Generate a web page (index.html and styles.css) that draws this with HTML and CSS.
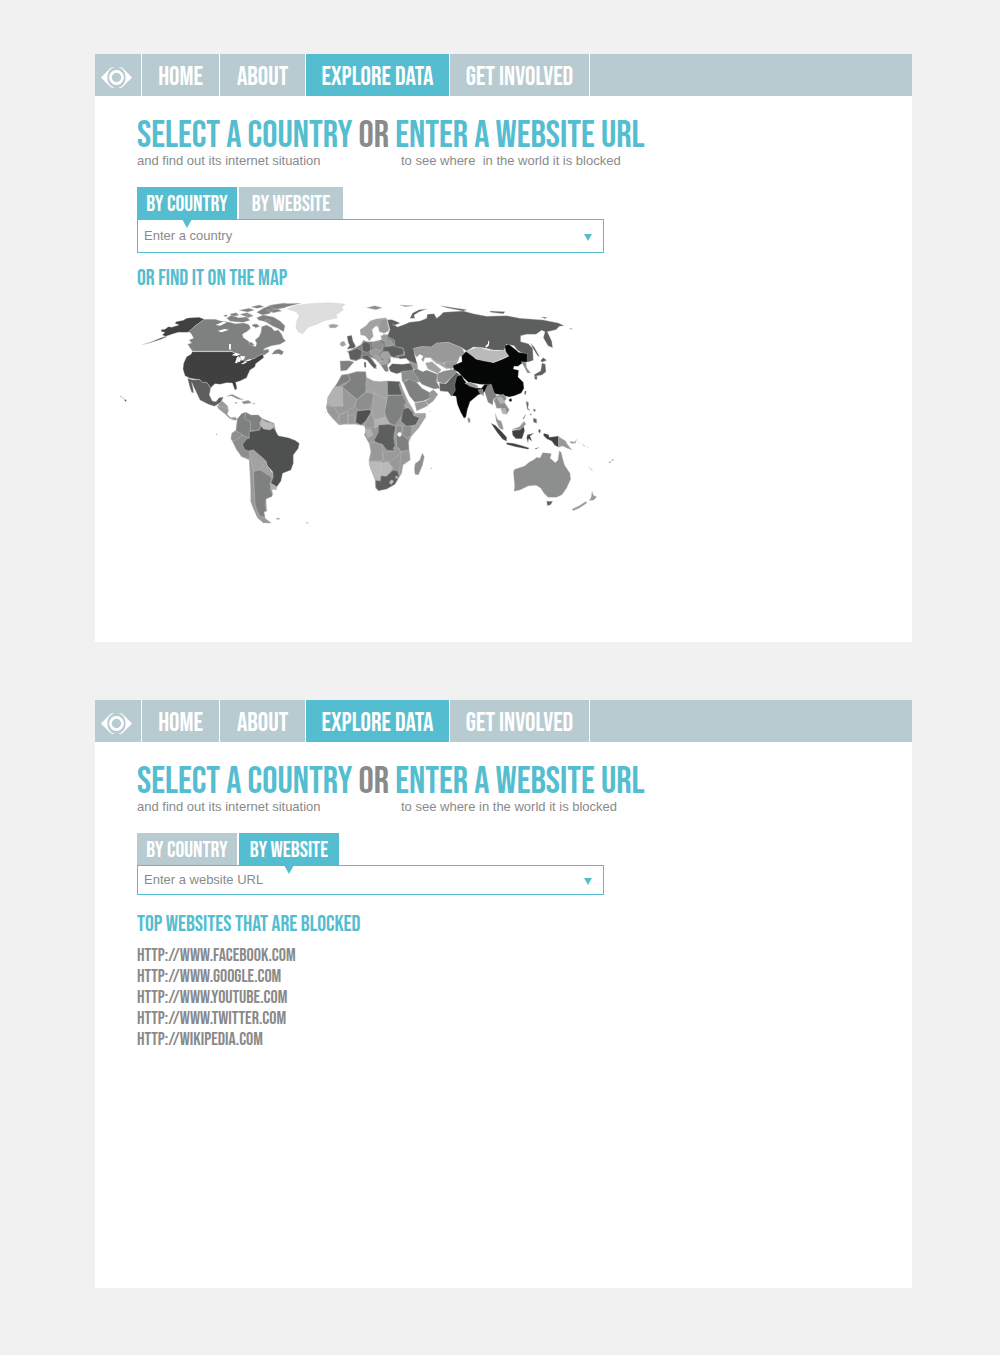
FILE: index.html
```html
<!DOCTYPE html>
<html lang="en">
<head>
<meta charset="utf-8">
<meta name="viewport" content="width=device-width, initial-scale=1">
<title>Explore data</title>
<link rel="stylesheet" href="styles.css">
</head>
<body>
<svg class="sprite" aria-hidden="true">
  <symbol id="eye" viewBox="0 0 92 62">
    <path d="M0 31 28 3C32 0 36 0 40 0 26 6 19 16 19 31s7 25 21 31c-4 0-8 0-12-3Z" fill="#fff"/>
    <path d="M92 31 64 3C60 0 56 0 52 0 66 6 73 16 73 31S66 56 52 62c4 0 8 0 12-3Z" fill="#fff"/>
    <circle cx="46" cy="31" r="18" fill="none" stroke="#fff" stroke-width="8"/>
  </symbol>
</svg>
<main class="page">
  <section class="panel">
    <nav class="nav" aria-label="Main">
      <a class="nav-logo" href="#" aria-label="Start"><svg class="eye"><use href="#eye"/></svg></a>
      <a class="nav-home" href="#">HOME</a>
      <a class="nav-about" href="#">ABOUT</a>
      <a class="nav-explore active" href="#">EXPLORE DATA</a>
      <a class="nav-involved" href="#">GET INVOLVED</a>
    </nav>
    <div class="content">
      <h1 class="headline"><span>SELECT A COUNTRY</span> <em>OR</em> <span>ENTER A WEBSITE URL</span></h1>
      <div class="sublines"><p>and find out its internet situation</p><p class="spaced">to see where  in the world it is blocked</p></div>
      <div class="tabs">
        <button class="tab active" type="button">BY COUNTRY</button>
        <button class="tab wide" type="button">BY WEBSITE</button>
      </div>
      <div class="field">
        <input type="text" aria-label="Country" placeholder="Enter a country">
        <button class="open" type="button" aria-label="Show countries"><svg viewBox="0 0 8 7"><path d="M0 0h8L4 7z"/></svg></button>
      </div>
      <h2 class="subhead">OR FIND IT ON THE MAP</h2>
      <svg class="map" viewBox="0 0 1530 720" role="img" aria-label="World map">
        <!-- North America -->
        <g>
          <path class="c3" d="M268 73 252 67 228 68 215 70 205 76 183 80 180 85 192 90 170 97 160 95 150 103 138 104 140 110 150 112 142 120 155 125 140 132 110 142 82 149 110 140 135 130 170 118 190 112 220 112 240 93Z"/>
          <path class="c6" d="M268 73 300 73 318 78 345 82 360 86 385 84 400 88 408 98 398 108 382 118 385 128 400 138 410 150 422 155 425 145 420 135 432 125 438 112 440 95 455 90 470 98 478 108 490 105 500 118 505 130 512 138 495 148 470 152 450 160 445 166 460 162 462 170 448 180 440 178 420 190 395 197 380 200 375 182 355 172 350 168 232 168 218 148 230 144 222 135 236 130 228 115 220 110 240 93Z"/>
          <path class="c6" d="M335 70 350 60 370 68 395 66 405 76 385 82 360 80 345 78ZM344 57l20-4 8 8-18 3ZM375 58l22-5 18 9-14 6ZM372 46l30-6 16 5-20 6ZM408 36l25-6 14 5-20 5ZM425 52l20-12 25-10 42-6v14l-35 6-15 12-20 4ZM425 68l20-8 30 6 20 12 15 14 -4 18-18-10-14-6-20-12-22-6ZM410 90l14-4 10 8-14 6ZM455 46l30-6 15 8-25 5ZM470 178l10-12 12-4 14 8-6 10-10-4Z"/>
          <path class="c6" d="M400 146l8-5 10 8-8 3ZM392 60l8-3 8 4-6 3ZM448 76l14-2 6 6-10 2ZM326 62l8-3 4 4-8 2Z"/>
          <path class="w" d="M302 90l22-10 12 2-20 10ZM308 108l20-6 14 2-22 8ZM342 148l6-2-1 20-5-4ZM436 76l14 5 4 6-12-3ZM404 92l18 5-2 3-14-2Z"/>
          <path class="c3" d="M232 170 350 170 362 176 378 182 370 190 366 202 375 200 380 190 388 200 400 197 420 190 432 182 444 177 446 188 430 200 422 206 420 215 405 225 398 240 395 248 375 258 362 262 366 280 360 286 355 272 352 264 335 263 315 268 300 266 290 275 288 280 275 262 262 262 255 254 225 250 210 242 204 222 206 205 215 185 228 178Z"/>
          <path class="w" d="M350 181 362 173 376 178 366 183ZM366 186 373 183 366 205 360 204ZM376 183 390 184 388 192 380 198 378 190ZM378 206 394 199 396 202 384 208ZM394 196 406 192 408 195 398 199Z"/>
          <path class="c5" d="M218 250 232 254 255 254 262 262 275 262 287 280 283 300 292 318 303 320 312 308 325 306 318 322 308 328 298 334 280 328 255 315 246 296 230 262 234 280 236 294 230 292 224 275Z"/>
          <path class="c8" d="M308 330 322 318 338 333 340 348 330 350 320 340Z"/>
          <path class="c7" d="M335 304l16-6 25 12 10 5-18-3-18-9ZM380 320l20-4 10 8-24 3ZM360 322l8 1-6 3ZM414 324l7 1-6 3ZM436 328l3 4M440 346l3 6"/>
          <path class="c3" d="M28 313l6 2-1 5-5-4ZM16 303l4 2-3 1ZM22 307l5 3-3 0Z"/>
        </g>
        <!-- South America -->
        <g transform="translate(285 330)">
          <path class="c8" d="M20 2 42 7 56 14 52 28 62 38 77 36 82 44 72 46 58 40 44 26 26 12Z"/>
          <path class="c7" d="M82 42 95 26 108 22 122 30 145 30 156 40 192 55 198 80 150 90 170 180 195 215 185 250 188 268 168 282 170 318 160 322 166 340 182 354 160 352 142 335 128 300 122 240 118 165 95 155 68 110 62 100 66 84 78 75Z"/>
          <path class="c6" d="M82 42 95 26 108 22 104 40 122 50 122 75 118 80 118 100 98 90 78 78Z"/>
          <path class="c6" d="M108 22 122 30 145 30 156 42 150 56 152 66 138 78 122 75 122 50 104 42Z"/>
          <path class="cB" d="M156 42l12 10-2 22-14-8-2-14ZM168 52l14 2-2 20-14 0ZM182 54l11 5-5 15-8-1Z"/>
          <path class="c7" d="M78 78 98 88 88 98 72 110 64 104 66 84Z"/>
          <path class="c7" d="M68 110 88 98 98 90 118 100 98 118 102 132 118 138 120 160 95 155 80 135Z"/>
          <path class="c9" d="M118 138 130 132 158 156 168 168 158 190 145 195 130 198 122 160Z"/>
          <path class="c9" d="M150 192 158 180 172 184 176 198 190 205 186 220 172 216Z"/>
          <path class="c4" d="M98 118 110 102 118 100 118 80 135 78 150 75 152 62 160 72 180 75 190 68 198 80 205 92 235 98 255 106 268 115 265 130 250 150 250 175 243 195 218 205 213 228 200 246 183 235 190 215 188 200 172 182 168 168 158 158 130 134 115 138 102 132Z"/>
          <path class="c6" d="M130 200 150 195 185 217 180 235 183 250 180 255 188 268 185 275 168 282 165 300 170 318 162 320 165 335 150 335 143 320 135 300 132 250Z"/>
          <path class="cA" d="M181 235 200 246 200 254 184 254Z"/>
          <path class="c8" d="M118 160 122 162 130 200 132 250 136 305 148 335 162 338 184 354 160 354 142 338 128 306 122 290 122 240Z"/>
          <path class="c5" d="M197 342l10-3 2 4ZM288 353l8 0-4 2ZM18 86l4 2-3 1Z"/>
        </g>
        <!-- Europe and Asia -->
        <g transform="translate(495 0)">
          <path class="cD" d="M22 42 45 32 90 26 145 23 195 27 185 38 190 44 168 60 172 68 130 78 110 88 85 96 68 116 56 112 48 98 50 80 58 62 48 50Z"/>
          <path class="c6" d="M-35 32 0 26 62 25 30 33 8 38-15 42-22 38Z"/>
          <path class="c9" d="M146 90l14-3 16 4-8 7-18 1ZM182 142l10-4 6 12-12 5-6-6Z"/>
          <path class="c9" d="M242 120 240 104 258 92 270 78 288 72 318 68 322 82 328 102 315 114 300 110 294 96 288 92 276 104 280 124 268 138 262 130 255 122Z"/>
          <path class="c8" d="M296 88 304 74 320 72 324 96 326 108 312 114 298 110Z"/>
          <path class="c5" d="M201 124l14-3 4 18 8 14-4 6-22 4 8-12-4-8Z"/>
          <path class="c6" d="M180 198 208 197 222 201 200 226 182 228Z"/>
          <path class="c6" d="M200 170 214 164 230 156 244 148 250 136 262 140 280 140 304 134 310 118 328 120 342 132 345 154 370 160 375 180 352 190 330 184 332 200 322 210 326 228 316 230 305 214 292 196 272 186 285 205 290 222 274 212 258 190 240 192 228 198 212 194 212 176Z"/>
          <path class="c5" d="M246 146 258 140 270 146 272 166 262 172 248 168ZM205 170 232 160 246 168 242 190 228 196 210 192Z"/>
          <path class="c5" d="M246 182 262 180 270 188 290 212 284 222 262 196 250 192ZM252 202l6 0v16l-5-2Z"/>
          <path class="c7" d="M276 146 300 138 310 150 306 166 282 160Z"/>
          <path class="c8" d="M302 122 318 120 324 132 308 138ZM314 138 332 134 340 150 318 154ZM270 166l18-4 16 6-10 12-22 0Z"/>
          <path class="c9" d="M304 174 322 170 334 188 316 196 302 186ZM278 182l20 0 8 18-12 2ZM300 198l26-2-4 10-18 4Z"/>
          <path class="c5" d="M310 156 345 152 372 162 370 178 350 182 342 188 332 182 326 170 308 168Z"/>
          <path class="c5" d="M322 74 336 74 360 84 340 92 338 86 352 96 375 88 388 82 420 78 440 70 442 58 462 56 470 70 480 62 490 52 515 50 550 48 580 56 620 64 680 62 720 70 790 75 835 84 852 92 838 94 828 104 802 110 815 138 818 158 804 152 790 128 795 110 785 106 768 118 740 118 722 122 722 140 745 146 758 160 760 196 742 202 728 175 712 166 702 152 680 148 672 166 640 165 610 158 580 156 560 168 545 158 505 142 470 145 454 156 424 155 405 160 404 180 412 208 396 206 378 190 360 192 352 186 375 180 370 160 345 154 342 134 322 124 330 104Z"/>
          <path class="c5" d="M390 70 398 54 418 44 440 42 418 50 402 60 404 70ZM482 32 520 38 560 44 550 48 500 38ZM630 48 675 50 670 56 632 52ZM784 66l16 1-4 4ZM868 100l10 2-6 1Z"/>
          <path class="c7" d="M260 38l24-6 22 6-18 6ZM360 30l40 2-24 3Z"/>
          <path class="c5" d="M326 218 336 206 368 208 395 204 402 218 398 228 370 230 350 236 332 230Z"/>
          <path class="c8" d="M384 196 412 208 414 222 400 222 392 206Z"/>
          <path class="c8" d="M400 160 424 155 454 156 470 144 505 142 545 158 556 176 538 186 534 200 510 202 490 204 470 206 452 188 434 188 428 208 412 190 404 178Z"/>
          <path class="c9" d="M436 204 456 200 484 224 474 236 444 222ZM452 192 474 206 500 222 510 218 490 204 470 200Z"/>
          <path class="c8" d="M494 202 532 198 530 210 514 222 494 216Z"/>
          <path class="c6" d="M398 228 408 220 424 228 442 226 472 238 470 260 480 280 462 282 440 274 426 268 406 246Z"/>
          <path class="c7" d="M364 230 396 226 412 246 418 262 404 262 380 254 372 264 366 258Z"/>
          <path class="c6" d="M370 262 388 252 410 262 426 280 448 292 460 292 450 310 430 318 404 322 388 302Z"/>
          <path class="c8" d="M448 292 460 284 474 298 460 318 444 330 436 318 450 310ZM404 324 436 318 444 332 410 348Z"/>
          <path class="c7" d="M472 236 492 228 524 222 530 232 512 250 494 266 472 260Z"/>
          <path class="c5" d="M478 264 498 266 514 248 530 232 544 244 528 270 528 290 514 304 504 290 480 288Z"/>
          <path class="w" d="M410 186 420 178 430 184 424 194 436 206 438 224 430 230 418 224 420 210 408 196Z"/>
          <path class="c0" d="M518 212 546 200 545 182 552 176 558 169 576 178 588 192 612 196 640 203 664 194 686 184 678 176 674 152 686 148 702 160 716 172 742 176 742 200 724 206 714 214 702 214 700 222 716 226 714 246 730 262 732 280 724 294 704 302 688 306 672 302 652 298 640 296 630 270 600 268 565 262 545 244 536 232 522 224ZM686 314l8-4 2 8-6 2Z"/>
          <path class="cB" d="M558 169 588 158 602 158 625 166 652 168 674 166 686 182 664 192 640 202 612 198 588 192Z"/>
          <path class="w" d="M616 154 624 146 624 136 628 142 626 152 618 158Z"/>
          <path class="c0" d="M530 244 544 240 552 254 562 266 590 278 604 280 614 268 632 268 622 282 610 294 594 300 570 320 562 344 558 366 552 370 542 352 532 328 528 304 516 302 526 286 524 270Z"/>
          <path class="c8" d="M554 264 570 262 594 272 592 280 570 274Z"/>
          <path class="c6" d="M594 284l14-2 4 20-12-6ZM614 290 622 272 634 268 642 292 652 304 640 314 638 330 624 322Z"/>
          <path class="c7" d="M642 316 652 302 670 298 680 310 672 320 688 344 680 358 668 352 664 340 650 340Z"/>
          <path class="cA" d="M650 308 664 306 676 322 662 326ZM662 342 676 340 680 358 668 356Z"/>
          <path class="c7" d="M564 367l6 4 1 10-5 3-3-10ZM724 200l14 2 2 16 12 16-10 0-8-16Z"/>
          <path class="c5" d="M752 144l12 14 14 26-4 0-16-26ZM782 196 790 188 800 196 786 202ZM786 204 796 208 798 230 786 240 772 242 762 246 764 238 782 228ZM764 244l8 0-2 10-6-2ZM734 288l5 0-2 12-4-4Z"/>
        </g>
        <!-- Africa -->
        <g transform="translate(630 210)">
          <path class="c8" d="M50 30 65 28 95 20 122 20 125 38 145 48 165 50 187 48 225 50 232 70 250 110 262 130 270 145 300 145 302 155 280 190 258 215 250 235 253 262 255 285 232 300 230 325 210 358 185 372 160 377 152 370 150 345 133 300 132 288 138 260 132 235 118 210 122 195 118 182 105 180 90 178 60 178 42 180 22 160 8 140 4 130 8 100 25 70 40 50Z"/>
          <path class="c6" d="M50 30 70 28 76 46 40 64 30 66Z"/>
          <path class="c6" d="M70 28 95 20 122 20 126 62 122 80 96 104 52 66 76 46Z"/>
          <path class="cA" d="M8 96 28 66 52 66 54 124 24 124 8 118Z"/>
          <path class="c8" d="M52 66 96 104 88 126 64 138 44 150 24 124 54 124Z"/>
          <path class="c7" d="M96 104 124 82 146 86 142 118 134 134 100 136 90 124Z"/>
          <path class="c9" d="M126 38 145 48 165 50 187 48 187 102 146 82 124 80 122 56Z"/>
          <path class="c5" d="M187 48 225 50 222 60 232 90 188 90Z"/>
          <path class="c6" d="M188 92 234 90 244 116 232 150 210 182 190 172 178 142Z"/>
          <path class="c9" d="M146 84 186 102 178 142 182 156 150 166 140 140 144 120Z"/>
          <path class="c4" d="M96 138 134 134 138 142 122 168 108 180 92 172Z"/>
          <path class="c8" d="M4 124 24 124 42 148 36 172 22 158 8 142ZM44 150 68 140 70 176 42 178ZM68 150l20 0 0 26-18 2Z"/>
          <path class="c8" d="M140 144 148 166 150 188 124 188 118 182 126 164Z"/>
          <path class="cA" d="M148 166 182 156 194 176 168 180 150 188ZM120 192 136 192 144 210 128 218Z"/>
          <path class="c5" d="M160 180 192 178 212 184 206 216 210 242 204 250 210 258 186 256 172 238 150 232 148 224 160 202Z"/>
          <path class="c5" d="M234 132 250 128 264 144 266 152 284 158 272 180 244 184 228 168Z"/>
          <path class="c9" d="M266 148 302 145 302 156 280 190 262 208 258 186 274 178 284 158ZM236 122 248 110 262 130 258 132Z"/>
          <path class="c7" d="M234 182 260 184 260 208 248 220 230 208ZM212 184 232 182 230 206 214 208Z"/>
          <path class="c6" d="M214 210 230 208 250 224 252 256 228 260 216 246Z"/>
          <path class="c8" d="M134 232 152 232 172 240 174 286 132 288 138 260Z"/>
          <path class="cB" d="M132 290 170 290 166 346 152 346 136 310ZM168 294 190 290 204 310 184 334 166 330Z"/>
          <path class="c8" d="M174 262 204 260 222 248 228 264 208 280 192 290 176 284ZM228 260 252 256 256 284 234 300 230 324 222 326 226 290Z"/>
          <path class="c5" d="M152 346 166 348 168 332 184 334 204 316 218 318 222 334 210 358 185 372 160 377 152 366Z"/>
          <path class="cB" d="M194 350l6-6 6 5-6 9-6-3ZM212 334l6 0-1 7-5-1Z"/>
          <path class="w" d="M218 204l8-3 4 8-5 7-7-4Z"/>
          <path class="c7" d="M270 296 284 286 292 264 298 276 292 302 280 330 270 328 268 312Z"/>
          <path class="c8" d="M0 142l3 1-2 1ZM317 310l4-2-2 4ZM312 140l6-2Z"/>
        </g>
        <!-- South-east Asia and Oceania -->
        <g transform="translate(975 255)">
          <path class="c8" d="M166 100 172 118 184 124 190 144 188 150 178 144 168 122Z"/>
          <path class="c3" d="M153 130 166 136 186 156 200 172 200 184 188 178 172 158ZM198 188 220 190 242 196 268 204 264 208 226 200 202 194ZM216 152 240 148 250 136 254 152 246 176 228 176 218 166ZM262 164 282 160 270 168 276 184 266 176 264 188 260 174ZM312 160l14 4 2 8 28-4 0 34-12-6-8-12-16-8-10-10ZM284 206l14-4-10 6ZM296 148l6 2-2 10-4-4Z"/>
          <path class="c8" d="M216 148 238 140 252 124 258 132 250 140 240 150Z"/>
          <path class="c8" d="M356 170 376 182 384 196 396 210 380 204 368 198 356 202ZM390 184l14 2 6-8-4 12-14 0ZM414 184l6 6ZM426 190l10 10-6-4ZM440 200l6 4Z"/>
          <path class="c5" d="M258 64l8 4-2 16 6 8-8-4ZM280 86l8 4-6 6ZM280 114l10 4 0 12-10-4ZM248 116l10-14-6 14ZM270 100l6 4-4 2Z"/>
          <path class="c7" d="M220 276 224 268 254 258 268 246 280 240 290 232 300 234 308 218 330 220 334 222 330 234 346 248 354 240 358 212 364 218 368 236 374 256 390 280 392 298 380 324 366 344 350 352 324 352 312 340 302 324 288 316 264 318 240 330 222 334 224 318 222 296Z"/>
          <path class="c5" d="M320 364 338 364 332 374 322 377ZM304 326l7 0-3 4Z"/>
          <path class="c8" d="M456 334 460 346 470 350 462 360 448 362 454 350ZM396 388 420 376 438 364 440 370 418 384 400 392ZM446 260l12 12-4-2ZM506 246l6-2 0 4-5 0ZM514 240l8-2-4 5Z"/>
        </g>
      </svg>
    </div>
  </section>

  <section class="panel">
    <nav class="nav" aria-label="Main, website view">
      <a class="nav-logo" href="#" aria-label="Start"><svg class="eye"><use href="#eye"/></svg></a>
      <a class="nav-home" href="#">HOME</a>
      <a class="nav-about" href="#">ABOUT</a>
      <a class="nav-explore active" href="#">EXPLORE DATA</a>
      <a class="nav-involved" href="#">GET INVOLVED</a>
    </nav>
    <div class="content">
      <h1 class="headline"><span>SELECT A COUNTRY</span> <em>OR</em> <span>ENTER A WEBSITE URL</span></h1>
      <div class="sublines"><p>and find out its internet situation</p><p>to see where in the world it is blocked</p></div>
      <div class="tabs">
        <button class="tab" type="button">BY COUNTRY</button>
        <button class="tab active" type="button">BY WEBSITE</button>
      </div>
      <div class="field short">
        <input type="text" aria-label="Website URL" placeholder="Enter a website URL">
        <button class="open" type="button" aria-label="Show websites"><svg viewBox="0 0 8 7"><path d="M0 0h8L4 7z"/></svg></button>
      </div>
      <h2 class="subhead spacious">TOP WEBSITES THAT ARE BLOCKED</h2>
      <ul class="sites">
        <li><a href="#">HTTP://WWW.FACEBOOK.COM</a></li>
        <li><a href="#">HTTP://WWW.GOOGLE.COM</a></li>
        <li><a href="#">HTTP://WWW.YOUTUBE.COM</a></li>
        <li><a href="#">HTTP://WWW.TWITTER.COM</a></li>
        <li><a href="#">HTTP://WIKIPEDIA.COM</a></li>
      </ul>
    </div>
  </section>
</main>
</body>
</html>
```
FILE: styles.css
```css
:root {
  --teal: #54bdd0;
  --mist: #b8cbd1;
  --grey: #8a8a8a;
  --display: "Bebas Neue", "Liberation Sans Narrow", "Roboto Condensed", "Liberation Sans", sans-serif;
}
* { box-sizing: border-box; }
body {
  margin: 0;
  background: #f1f1f1;
  color: var(--grey);
  font: 13px/16px "Liberation Sans", Arial, sans-serif;
}
h1, h2, p, ul { margin: 0; padding: 0; }
a { color: inherit; text-decoration: none; }
button { border: 0; padding: 0; cursor: pointer; }
.sprite { display: none; }
.page {
  display: flex;
  flex-direction: column;
  gap: 58px;
  padding: 54px 88px 66px 95px;
}
.panel { min-height: 588px; background: #fff; }

.nav {
  display: flex;
  height: 42px;
  background: var(--mist);
  color: #fff;
  font: normal 26px/30px var(--display);
}
.nav a {
  display: flex;
  align-items: center;
  justify-content: center;
  padding-top: 5px;
  border-right: 1px solid #fff;
  white-space: nowrap;
}
.nav .nav-logo { width: 47px; padding-right: 3px; }
.nav-home { width: 78px; }
.nav-about { width: 86px; }
.nav-explore { width: 144px; }
.nav-involved { width: 140px; }
.active { background: var(--teal); }
.eye { width: 31px; height: 21px; }

.content { padding: 23px 42px 0; }
.headline {
  color: var(--teal);
  font: normal 38px/34px var(--display);
  white-space: nowrap;
}
.headline em { color: var(--grey); font-style: normal; }
.sublines { display: flex; }
.sublines p { flex: 0 0 264px; white-space: nowrap; }
.sublines .spaced { white-space: pre; }

.tabs { display: flex; gap: 2px; margin-top: 18px; }
.tab {
  position: relative;
  width: 100px;
  height: 32px;
  padding-top: 3px;
  background: var(--mist);
  color: #fff;
  font: normal 22px/24px var(--display);
}
.tab.wide { width: 104px; }
.tab.active { background: var(--teal); }
.tab.active::after {
  content: "";
  position: absolute;
  top: 100%;
  left: 50%;
  border: 5px solid transparent;
  border-top: 9px solid var(--teal);
  border-bottom: 0;
  transform: translateX(-50%);
}
.field {
  display: flex;
  max-width: 467px;
  height: 34px;
  border: 1px solid var(--teal);
}
.field.short { height: 30px; }
.field input {
  flex: 1;
  min-width: 0;
  padding: 0 6px;
  border: 0;
  background: transparent;
  color: var(--grey);
  font: inherit;
}
.field input::placeholder { color: var(--grey); opacity: 1; }
.open { width: 30px; background: transparent; }
.open svg { width: 8px; height: 7px; fill: var(--teal); }

.subhead {
  margin-top: 16px;
  color: var(--teal);
  font: normal 22px/20px var(--display);
}
.subhead.spacious { margin-top: 20px; }
.sites {
  margin-top: 10px;
  list-style: none;
  font: normal 18px/21px var(--display);
}

.map {
  display: block;
  width: 510px;
  max-width: none;
  height: 240px;
  margin: 6px 0 0 -22px;
}
.map path { stroke: #c4c4c4; stroke-width: 1; stroke-linejoin: round; }
.map .w { fill: #fff; stroke: none; }
.map .c0 { fill: #050606; }
.map .c3 { fill: #404040; }
.map .c4 { fill: #4f5150; }
.map .c5 { fill: #5d5e5e; }
.map .c6 { fill: #7f8180; }
.map .c7 { fill: #8d8e8e; }
.map .c8 { fill: #999; }
.map .c9 { fill: #a2a2a2; }
.map .cA { fill: #b2b2b2; }
.map .cB { fill: #bababa; }
.map .cD { fill: #dedede; }
```
